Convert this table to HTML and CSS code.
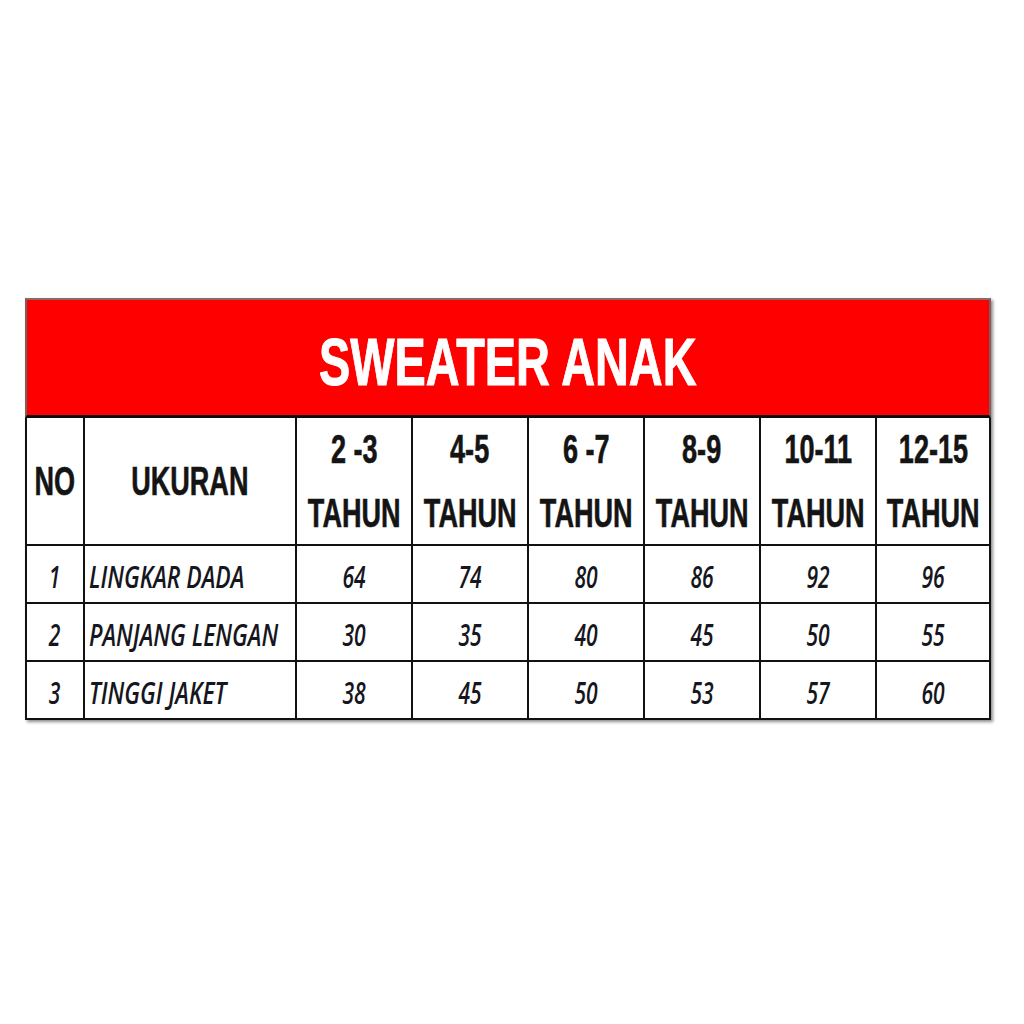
FILE: index.html
```html
<!DOCTYPE html>
<html lang="id">
<head>
<meta charset="utf-8">
<title>Sweater Anak</title>
<link rel="stylesheet" href="styles.css">
</head>
<body>
<div class="chart">
  <div class="title"><span class="title-text">SWEATER ANAK</span></div>
  <div class="grid">
    <div class="c h"><span class="t">NO</span></div>
    <div class="c h"><span class="t">UKURAN</span></div>
    <div class="c h two"><span class="t">2 -3</span><span class="t">TAHUN</span></div>
    <div class="c h two"><span class="t">4-5</span><span class="t">TAHUN</span></div>
    <div class="c h two"><span class="t">6 -7</span><span class="t">TAHUN</span></div>
    <div class="c h two"><span class="t">8-9</span><span class="t">TAHUN</span></div>
    <div class="c h two"><span class="t">10-11</span><span class="t">TAHUN</span></div>
    <div class="c h two"><span class="t">12-15</span><span class="t">TAHUN</span></div>

    <div class="c b"><span class="t">1</span></div>
    <div class="c b label"><span class="t">LINGKAR DADA</span></div>
    <div class="c b"><span class="t">64</span></div>
    <div class="c b"><span class="t">74</span></div>
    <div class="c b"><span class="t">80</span></div>
    <div class="c b"><span class="t">86</span></div>
    <div class="c b"><span class="t">92</span></div>
    <div class="c b"><span class="t">96</span></div>

    <div class="c b"><span class="t">2</span></div>
    <div class="c b label"><span class="t">PANJANG LENGAN</span></div>
    <div class="c b"><span class="t">30</span></div>
    <div class="c b"><span class="t">35</span></div>
    <div class="c b"><span class="t">40</span></div>
    <div class="c b"><span class="t">45</span></div>
    <div class="c b"><span class="t">50</span></div>
    <div class="c b"><span class="t">55</span></div>

    <div class="c b"><span class="t">3</span></div>
    <div class="c b label"><span class="t">TINGGI JAKET</span></div>
    <div class="c b"><span class="t">38</span></div>
    <div class="c b"><span class="t">45</span></div>
    <div class="c b"><span class="t">50</span></div>
    <div class="c b"><span class="t">53</span></div>
    <div class="c b"><span class="t">57</span></div>
    <div class="c b"><span class="t">60</span></div>
  </div>
</div>
</body>
</html>
```

FILE: styles.css
```css
html, body {
  margin: 0;
  padding: 0;
  background: #ffffff;
}

body {
  width: 1024px;
  height: 1024px;
  overflow: hidden;
}

.chart {
  margin: 298px 0 0 25px;
  width: 966px;
  box-shadow: 2px 2px 3px rgba(0, 0, 0, 0.45);
}

.title {
  box-sizing: border-box;
  height: 120px;
  padding-top: 8px;
  background: #fe0000;
  border-top: 2px solid #8c6a6a;
  border-left: 2px solid #7a6060;
  border-right: 2px solid #7a6060;
  border-bottom: 3px solid #0a0a0a;
  display: flex;
  align-items: center;
  justify-content: center;
}

.title-text {
  display: inline-block;
  font-family: "Liberation Sans", Arial, sans-serif;
  font-weight: 700;
  font-size: 66px;
  line-height: 1;
  color: #ffffff;
  white-space: nowrap;
  transform: scaleX(0.71);
  -webkit-text-stroke: 1px #ffffff;
}

.grid {
  display: grid;
  grid-template-columns: 56px 210px 114px 114px 114px 114px 114px 112px;
  grid-template-rows: 126px 56px 56px 56px;
  gap: 2px;
  padding: 0 2px 2px 2px;
  background: #111111;
}

.c {
  background: #ffffff;
  display: flex;
  align-items: center;
  justify-content: center;
  overflow: visible;
  min-width: 0;
}

.t {
  display: inline-block;
  white-space: nowrap;
  color: #141414;
}

.h {
  font-family: "Liberation Sans", Arial, sans-serif;
  font-weight: 700;
  font-size: 41px;
  line-height: 1;
}

.h .t {
  transform: scaleX(0.66);
  -webkit-text-stroke: 0.6px #141414;
}

.h.two {
  flex-direction: column;
}

.h.two .t {
  line-height: 64px;
}

.b {
  font-family: "Open Sans", "Noto Sans", sans-serif;
  font-style: italic;
  font-weight: 600;
  font-size: 31px;
  line-height: 1;
  padding-top: 4px;
  box-sizing: border-box;
}

.b .t {
  transform: scaleX(0.68);
  color: #161620;
}

.b.label {
  justify-content: flex-start;
  padding-left: 4px;
}

.b.label .t {
  transform: scaleX(0.74);
  transform-origin: left center;
}
```
